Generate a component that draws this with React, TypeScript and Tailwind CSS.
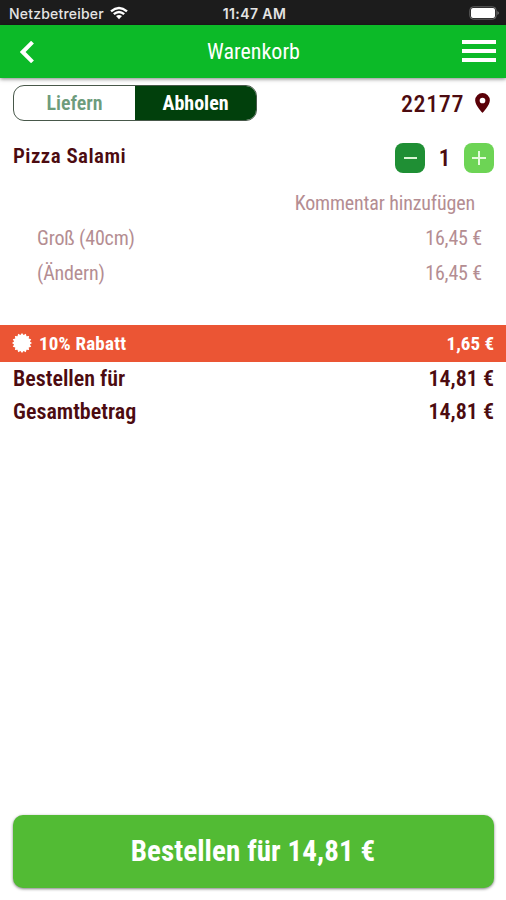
import React from "react";

const rc = "font-['Roboto_Condensed',Roboto,sans-serif] [font-stretch:75%]";

function Row({ left, right, className }: { left: React.ReactNode; right: React.ReactNode; className: string }) {
  return (
    <div className={`flex items-center justify-between whitespace-nowrap ${className}`}>
      <span>{left}</span>
      <span>{right}</span>
    </div>
  );
}

function Seal() {
  const points = Array.from({ length: 32 }, (_, i) => {
    const r = i % 2 ? 8.1 : 10;
    const a = (i * Math.PI) / 16;
    return `${10 + r * Math.sin(a)},${10 - r * Math.cos(a)}`;
  }).join(" ");
  return (
    <svg className="-mt-0.5 size-5" viewBox="0 0 20 20" fill="white">
      <polygon points={points} />
    </svg>
  );
}

export default function App() {
  return (
    <div className={`flex h-[900px] w-[506px] flex-col overflow-hidden bg-white text-[#4c0b10] ${rc}`}>
      <div className="grid h-[25px] shrink-0 grid-cols-3 items-center bg-[#1c1c1c] pt-0.5 pr-1.5 pl-[9px] font-[Inter,sans-serif] text-[14px] font-medium text-[#e4e4e4]">
        <div className="flex items-center gap-1.5">
          <span className="tracking-[0.2px]">Netzbetreiber</span>
          <svg className="-mt-0.5 h-[14px] w-[18px]" viewBox="0 0 18 13" fill="none" stroke="white" strokeWidth="2.4">
            <path d="M1 4.8Q9-2 17 4.8M3.8 7.7Q9 3.3 14.2 7.7" />
            <path d="M9 12.8 6 9.6Q9 7.2 12 9.6Z" fill="white" stroke="none" />
          </svg>
        </div>
        <span className="text-center font-semibold tracking-[0.4px]">11:47 AM</span>
        <svg className="-mt-0.5 h-[14px] w-[31px] justify-self-end" viewBox="0 0 31 14">
          <rect x="0.8" y="0.8" width="26.4" height="12.4" rx="3.5" fill="none" stroke="#666" strokeWidth="1" />
          <rect x="2" y="2" width="24" height="10" rx="2" fill="white" />
          <path d="M28.5 5Q31 7 28.5 9Z" fill="#8a8a8a" />
        </svg>
      </div>

      <header className="z-10 flex h-[53px] shrink-0 items-center justify-between bg-[#0cba28] pr-[10px] pl-[20px] text-white shadow-[0_1px_4px_rgba(0,0,0,0.5)]">
        <svg className="h-[22px] w-[25px]" viewBox="0 0 25 22" fill="none" stroke="white" strokeWidth="4">
          <path d="M12.5 1.2 2.7 11l9.8 9.8" />
        </svg>
        <h1 className="text-[22px]">Warenkorb</h1>
        <div className="mb-px flex w-[34px] flex-col gap-[5px]">
          <i className="h-1 bg-white" />
          <i className="h-1 bg-white" />
          <i className="h-1 bg-white" />
        </div>
      </header>

      <div className="mt-[7px] flex h-9 shrink-0 items-center justify-between pr-4 pl-[13px]">
        <div className="flex h-9 w-[244px] overflow-hidden rounded-[11px] border border-[#48584a] text-[20px] font-bold">
          <div className="flex flex-1 items-center justify-center font-semibold text-[#6d9c7c]">Liefern</div>
          <div className="flex flex-1 items-center justify-center bg-[#01400c] text-white">Abholen</div>
        </div>
        <div className="flex items-center gap-[11px] text-[24px] font-medium tracking-[0.6px]">
          <span className="pt-0.5">22177</span>
          <svg className="h-[20px] w-[15px]" viewBox="0 0 14 19" fill="#5a0008">
            <path fillRule="evenodd" d="M7 0a7 7 0 0 0-7 7c0 5 7 12 7 12s7-7 7-12a7 7 0 0 0-7-7Zm0 4.4a2.7 2.7 0 1 1 0 5.4 2.7 2.7 0 0 1 0-5.4Z" />
          </svg>
        </div>
      </div>

      <div className="mt-[22px] flex h-[30px] shrink-0 items-center justify-between pr-3 pl-[13px]">
        <span className="mb-0.5 text-[21px] font-semibold tracking-[0.45px]">Pizza Salami</span>
        <div className="flex items-center">
          <div className="flex size-[30px] items-center justify-center rounded-[8px] bg-[#1f8f34]">
            <i className="h-0.5 w-[13px] bg-[#d9f5d4]" />
          </div>
          <span className="w-[39px] pt-0.5 text-center text-[23px] font-semibold">1</span>
          <div className="grid size-[30px] place-items-center rounded-[8px] bg-[#6dd455]">
            <i className="col-start-1 row-start-1 h-0.5 w-[14px] bg-[#e5fbdc]" />
            <i className="col-start-1 row-start-1 h-[14px] w-0.5 bg-[#e5fbdc]" />
          </div>
        </div>
      </div>

      <div className="mt-3 shrink-0 text-[20px] font-normal tracking-[-0.15px] text-[#b48d92]">
        <div className="flex h-[35px] items-center justify-end pr-[31px]">Kommentar hinzufügen</div>
        <Row className="h-[35px] pr-6 pl-[37px]" left="Groß (40cm)" right="16,45 €" />
        <Row className="h-[35px] pt-px pr-6 pl-[37px]" left="(Ändern)" right="16,45 €" />
      </div>

      <Row
        className="mt-[35px] h-[37px] shrink-0 bg-[#eb5534] pt-px pr-3 pl-3 text-[19px] font-bold text-white"
        left={<span className="flex items-center gap-[7px] tracking-[0.2px]"><Seal />10% Rabatt</span>}
        right="1,65 €"
      />
      <Row className="h-[33px] shrink-0 pr-3 pl-[13px] text-[22px] font-semibold" left="Bestellen für" right="14,81 €" />
      <Row className="h-[33px] shrink-0 pr-3 pl-[13px] text-[22px] font-semibold" left="Gesamtbetrag" right="14,81 €" />

      <button className="mx-auto mt-auto mb-3 h-[73px] w-[481px] rounded-[10px] bg-[#52bb34] text-[29px] font-bold tracking-[0.1px] text-white shadow-[0_1px_3px_rgba(0,0,0,0.5)]">
        Bestellen für 14,81 €
      </button>
    </div>
  );
}
